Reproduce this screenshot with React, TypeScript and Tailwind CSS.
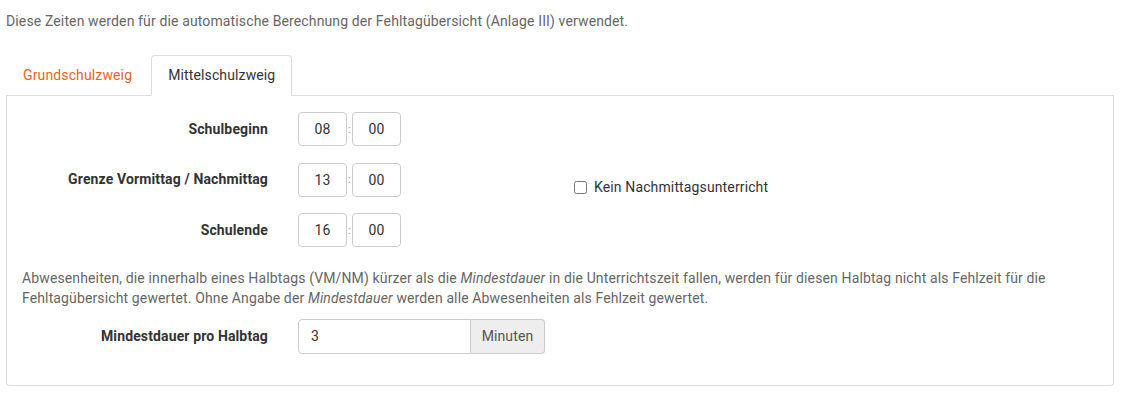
import { useState } from "react";

const FONT = { fontFamily: "Roboto, 'Liberation Sans', sans-serif" };

type Time = { h: string; m: string };

function TimeInput({ value, onChange }: { value: Time; onChange: (t: Time) => void }) {
  return (
    <div className="flex items-center">
      <input
        value={value.h}
        onChange={(e) => onChange({ ...value, h: e.target.value })}
        className="w-[49px] h-[34px] border border-[#ccc] rounded-[4px] text-center text-[#333] outline-none"
      />
      <span className="w-[5px] text-center text-[11px] text-[#999] leading-none">:</span>
      <input
        value={value.m}
        onChange={(e) => onChange({ ...value, m: e.target.value })}
        className="w-[49px] h-[34px] border border-[#ccc] rounded-[4px] text-center text-[#333] outline-none"
      />
    </div>
  );
}

export default function App() {
  const [tab, setTab] = useState<"grund" | "mittel">("mittel");
  const [beginn, setBeginn] = useState<Time>({ h: "08", m: "00" });
  const [grenze, setGrenze] = useState<Time>({ h: "13", m: "00" });
  const [ende, setEnde] = useState<Time>({ h: "16", m: "00" });
  const [keinNm, setKeinNm] = useState(false);
  const [dauer, setDauer] = useState("3");

  const rows: [string, Time, (t: Time) => void][] = [
    ["Schulbeginn", beginn, setBeginn],
    ["Grenze Vormittag / Nachmittag", grenze, setGrenze],
    ["Schulende", ende, setEnde],
  ];

  return (
    <div className="bg-white w-[1121px] h-[395px] pl-[6px] pr-[7px] text-[14px] tracking-[0.13px]" style={FONT}>
      <p className="text-[#666] pt-[11px] leading-[20px]">
        Diese Zeiten werden für die automatische Berechnung der Fehltagübersicht (Anlage III) verwendet.
      </p>

      {/* Tabs */}
      <div className="flex mt-[24px] border-b border-[#ddd]">
        <button
          onClick={() => setTab("grund")}
          className={`h-[41px] px-4 mr-[2px] -mb-px rounded-t-[4px] border ${
            tab === "grund" ? "bg-white border-[#ddd] border-b-white text-[#333]" : "border-transparent text-[#e5661f]"
          }`}
        >
          Grundschulzweig
        </button>
        <button
          onClick={() => setTab("mittel")}
          className={`h-[41px] px-4 mr-[2px] -mb-px rounded-t-[4px] border ${
            tab === "mittel" ? "bg-white border-[#ddd] border-b-white text-[#333]" : "border-transparent text-[#e5661f]"
          }`}
        >
          Mittelschulzweig
        </button>
      </div>

      {/* Panel */}
      <div className="border border-t-0 border-[#ddd] rounded-b-[4px] px-[15px] pt-[16px] pb-[31px]">
        <div className="flex">
          <div className="flex flex-col gap-[16.5px]">
            {rows.map(([label, val, set]) => (
              <div key={label} className="flex items-center">
                <label className="w-[246px] text-right font-bold text-[#333]">{label}</label>
                <div className="ml-[30px]">
                  <TimeInput value={val} onChange={set} />
                </div>
              </div>
            ))}
          </div>
          <label className="ml-[173px] mt-[65px] h-[20px] flex items-center gap-[7px] text-[#333] self-start">
            <input
              type="checkbox"
              checked={keinNm}
              onChange={(e) => setKeinNm(e.target.checked)}
              className="w-[13px] h-[13px] m-0"
            />
            Kein Nachmittagsunterricht
          </label>
        </div>

        <p className="mt-[21px] text-[#666] leading-[20px]">
          Abwesenheiten, die innerhalb eines Halbtags (VM/NM) kürzer als die <i>Mindestdauer</i> in die
          Unterrichtszeit fallen, werden für diesen Halbtag nicht als Fehlzeit für die Fehltagübersicht
          gewertet. Ohne Angabe der <i>Mindestdauer</i> werden alle Abwesenheiten als Fehlzeit gewertet.
        </p>

        <div className="flex items-center mt-[11px]">
          <label className="w-[246px] text-right font-bold text-[#333]">Mindestdauer pro Halbtag</label>
          <div className="ml-[30px] flex h-[35px] w-[247px]">
            <input
              value={dauer}
              onChange={(e) => setDauer(e.target.value)}
              className="flex-1 min-w-0 border border-[#ccc] rounded-l-[4px] px-[12px] text-[#333] outline-none"
            />
            <span className="w-[74px] border border-l-0 border-[#ccc] rounded-r-[4px] bg-[#eee] text-[#555] flex items-center justify-center">
              Minuten
            </span>
          </div>
        </div>
      </div>
    </div>
  );
}
